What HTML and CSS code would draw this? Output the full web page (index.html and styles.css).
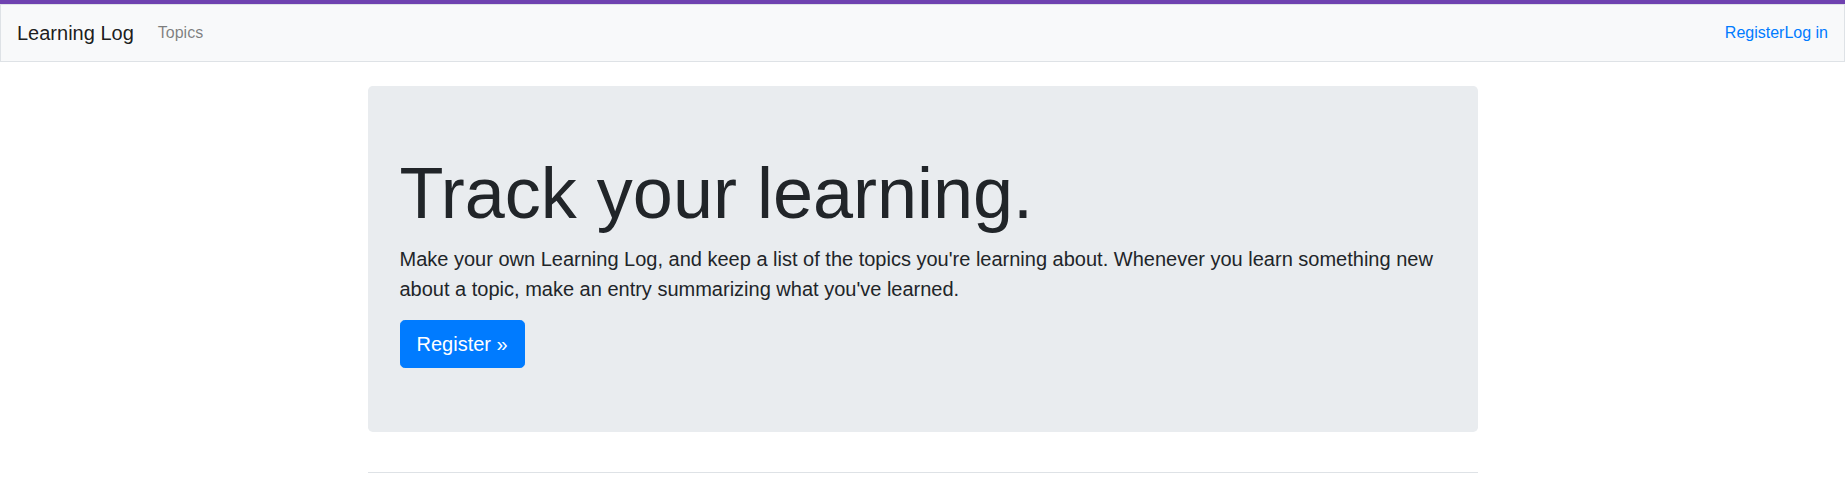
FILE: index.html
```
<!DOCTYPE html>
<html lang="en">
<head>
<meta charset="utf-8">
<title>Learning Log</title>
<link rel="stylesheet" href="styles.css">
</head>
<body>
<div class="topbar"></div>
<nav class="navbar">
  <a class="brand" href="#">Learning Log</a>
  <ul class="nav nav-left">
    <li><a class="nav-link" href="#">Topics</a></li>
  </ul>
  <ul class="nav nav-right">
    <li><a class="plain-link" href="#">Register</a></li>
    <li><a class="plain-link" href="#">Log in</a></li>
  </ul>
</nav>
<main class="container">
  <div class="page-header">
    <div class="jumbotron">
      <h1 class="display">Track your learning.</h1>
      <p class="lead">Make your own Learning Log, and keep a list of the topics you're learning about. Whenever you learn something new about a topic, make an entry summarizing what you've learned.</p>
      <a class="btn" href="#">Register &raquo;</a>
    </div>
  </div>
</main>
</body>
</html>
```

FILE: styles.css
```
* { box-sizing: border-box; }
html, body { margin: 0; padding: 0; }
body {
  font-family: "Liberation Sans", Arial, sans-serif;
  font-size: 16px;
  line-height: 1.5;
  color: #212529;
  background: #fff;
}
a { text-decoration: none; }
.topbar {
  height: 4px;
  background: #6f42b0;
}
.navbar {
  display: flex;
  align-items: center;
  padding: 8px 16px;
  background: #f8f9fa;
  border: 1px solid #dee2e6;
  margin-bottom: 24px;
}
.brand {
  font-size: 20px;
  line-height: 30px;
  padding: 5px 0;
  margin-right: 16px;
  color: rgba(0,0,0,.9);
}
.nav {
  list-style: none;
  margin: 0;
  padding: 0;
  display: flex;
}
.nav-left { margin-right: auto; }
.nav-link {
  display: block;
  padding: 8px;
  color: rgba(0,0,0,.5);
}
.plain-link { color: #007bff; }
.container {
  width: 1140px;
  margin: 0 auto;
  padding: 0 15px;
}
.page-header {
  padding-bottom: 8px;
  margin-bottom: 8px;
  border-bottom: 1px solid #dee2e6;
}
.jumbotron {
  background: #e9ecef;
  border-radius: 4.8px;
  padding: 64px 32px;
  margin-bottom: 32px;
}
.display {
  font-size: 72px;
  font-weight: 300;
  line-height: 1.2;
  margin: 0 0 8px;
}
.lead {
  font-size: 20px;
  font-weight: 300;
  margin: 0 0 16px;
}
.btn {
  display: inline-block;
  font-size: 20px;
  line-height: 1.5;
  padding: 8px 16px;
  border: 1px solid #007bff;
  border-radius: 4.8px;
  background: #007bff;
  color: #fff;
}
```
